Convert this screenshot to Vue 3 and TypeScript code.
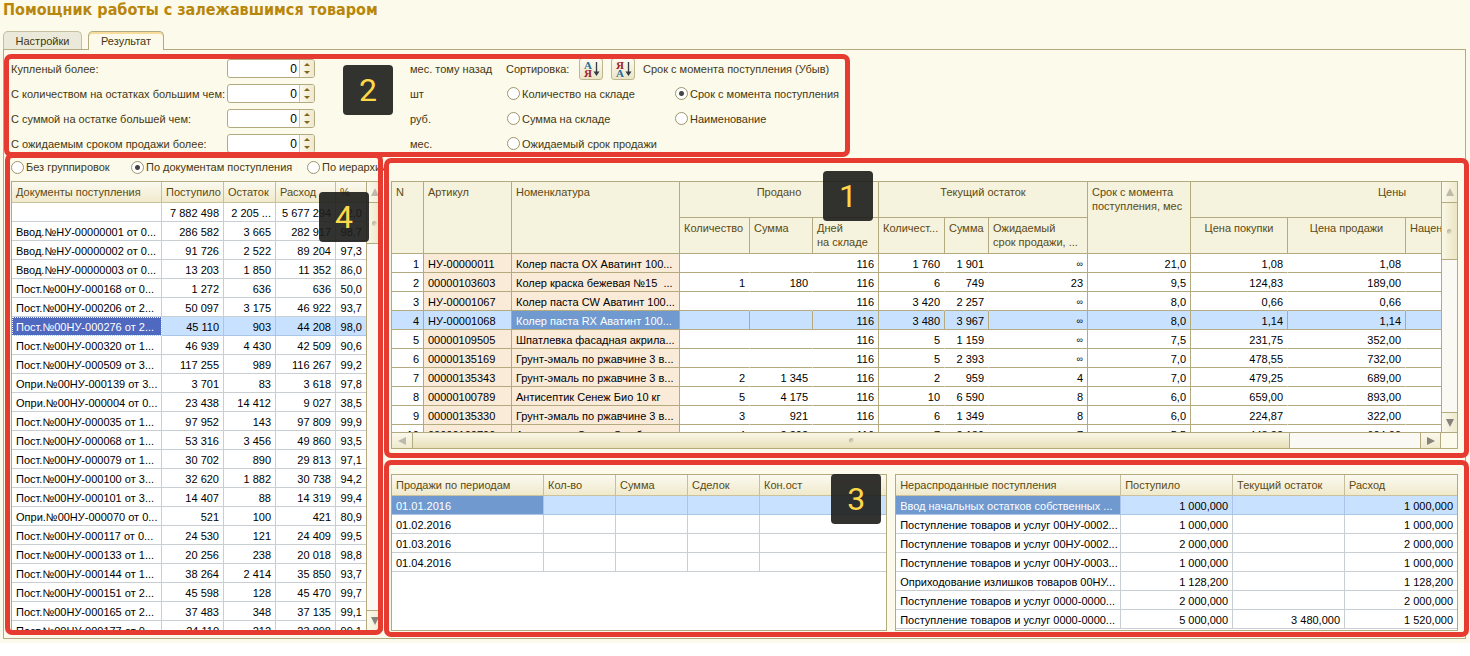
<script setup lang="ts">
import { ref } from 'vue'

interface Filter {
  id: string
  label: string
  unit: string
  value: string
}

const filters = ref<Filter[]>([
  { id: 'bought', label: 'Купленый более:', unit: 'мес. тому назад', value: '0' },
  { id: 'qty', label: 'С количеством на остатках большим чем:', unit: 'шт', value: '0' },
  { id: 'sum', label: 'С суммой на остатке большей чем:', unit: 'руб.', value: '0' },
  { id: 'term', label: 'С ожидаемым сроком продажи более:', unit: 'мес.', value: '0' },
])

const sortOptions = [
  ['Количество на складе', 'Срок с момента поступления'],
  ['Сумма на складе', 'Наименование'],
  ['Ожидаемый срок продажи'],
]
const sortBy = ref('Срок с момента поступления')

const groupings = ['Без группировок', 'По документам поступления', 'По иерархии']
const grouping = ref('По документам поступления')

const receipts: string[][] = [
  ['', '7 882 498', '2 205 ...', '5 677 294', '72,0'],
  ['Ввод.№НУ-00000001 от 0...', '286 582', '3 665', '282 917', '98,7'],
  ['Ввод.№НУ-00000002 от 0...', '91 726', '2 522', '89 204', '97,3'],
  ['Ввод.№НУ-00000003 от 0...', '13 203', '1 850', '11 352', '86,0'],
  ['Пост.№00НУ-000168 от 0...', '1 272', '636', '636', '50,0'],
  ['Пост.№00НУ-000206 от 2...', '50 097', '3 175', '46 922', '93,7'],
  ['Пост.№00НУ-000276 от 2...', '45 110', '903', '44 208', '98,0'],
  ['Пост.№00НУ-000320 от 1...', '46 939', '4 430', '42 509', '90,6'],
  ['Пост.№00НУ-000509 от 3...', '117 255', '989', '116 267', '99,2'],
  ['Опри.№00НУ-000139 от 3...', '3 701', '83', '3 618', '97,8'],
  ['Опри.№00НУ-000004 от 0...', '23 438', '14 412', '9 027', '38,5'],
  ['Пост.№00НУ-000035 от 1...', '97 952', '143', '97 809', '99,9'],
  ['Пост.№00НУ-000068 от 1...', '53 316', '3 456', '49 860', '93,5'],
  ['Пост.№00НУ-000079 от 1...', '30 702', '890', '29 813', '97,1'],
  ['Пост.№00НУ-000100 от 3...', '32 620', '1 882', '30 738', '94,2'],
  ['Пост.№00НУ-000101 от 3...', '14 407', '88', '14 319', '99,4'],
  ['Опри.№00НУ-000070 от 0...', '521', '100', '421', '80,9'],
  ['Пост.№00НУ-000117 от 0...', '24 530', '121', '24 409', '99,5'],
  ['Пост.№00НУ-000133 от 1...', '20 256', '238', '20 018', '98,8'],
  ['Пост.№00НУ-000144 от 1...', '38 264', '2 414', '35 850', '93,7'],
  ['Пост.№00НУ-000151 от 2...', '45 598', '128', '45 470', '99,7'],
  ['Пост.№00НУ-000165 от 2...', '37 483', '348', '37 135', '99,1'],
  ['Пост.№00НУ-000177 от 0...', '24 110', '212', '23 898', '99,1'],
]

const goods: string[][] = [
  ['1', 'НУ-00000011', 'Колер паста OX Аватинт 100...', '', '', '116', '1 760', '1 901', '∞', '21,0', '1,08', '1,08', ''],
  ['2', '00000103603', 'Колер краска бежевая №15  ...', '1', '180', '116', '6', '749', '23', '9,5', '124,83', '189,00', ''],
  ['3', 'НУ-00001067', 'Колер паста CW Аватинт 100...', '', '', '116', '3 420', '2 257', '∞', '8,0', '0,66', '0,66', ''],
  ['4', 'НУ-00001068', 'Колер паста RX Аватинт 100...', '', '', '116', '3 480', '3 967', '∞', '8,0', '1,14', '1,14', ''],
  ['5', '00000109505', 'Шпатлевка фасадная акрила...', '', '', '116', '5', '1 159', '∞', '7,5', '231,75', '352,00', ''],
  ['6', '00000135169', 'Грунт-эмаль по ржавчине 3 в...', '', '', '116', '5', '2 393', '∞', '7,0', '478,55', '732,00', ''],
  ['7', '00000135343', 'Грунт-эмаль по ржавчине 3 в...', '2', '1 345', '116', '2', '959', '4', '7,0', '479,25', '689,00', ''],
  ['8', '00000100789', 'Антисептик Сенеж Био 10 кг', '5', '4 175', '116', '10', '6 590', '8', '6,0', '659,00', '893,00', ''],
  ['9', '00000135330', 'Грунт-эмаль по ржавчине 3 в...', '3', '921', '116', '6', '1 349', '8', '6,0', '224,87', '322,00', ''],
  ['10', '00000100790', 'Антисептик Сенеж Эко б...', '4', '2 292', '116', '7', '3 139', '7', '5,5', '448,33', '604,00', ''],
]

const periods = ['01.01.2016', '01.02.2016', '01.03.2016', '01.04.2016']

const unsold: string[][] = [
  ['Ввод начальных остатков собственных ...', '1 000,000', '', '1 000,000'],
  ['Поступление товаров и услуг 00НУ-0002...', '1 000,000', '', '1 000,000'],
  ['Поступление товаров и услуг 00НУ-0002...', '2 000,000', '', '2 000,000'],
  ['Поступление товаров и услуг 00НУ-0003...', '1 000,000', '', '1 000,000'],
  ['Оприходование излишков товаров 00НУ...', '1 128,200', '', '1 128,200'],
  ['Поступление товаров и услуг 0000-0000...', '2 000,000', '', '2 000,000'],
  ['Поступление товаров и услуг 0000-0000...', '5 000,000', '3 480,000', '1 520,000'],
]

function step(f: Filter, d: number) {
  f.value = String(Math.max(0, (Number(f.value) || 0) + d))
}
</script>

<template>
  <main class="page">
    <h1>Помощник работы с залежавшимся товаром</h1>

    <nav class="tabs">
      <button type="button" class="tab">Настройки</button>
      <button type="button" class="tab active">Результат</button>
    </nav>

    <div class="panel">
      <section class="filters">
        <template v-for="(f, i) in filters" :key="f.id">
          <label :for="f.id">{{ f.label }}</label>
          <div class="field">
            <input :id="f.id" v-model="f.value" type="text" />
            <span class="spin">
              <button type="button" aria-label="Больше" @click="step(f, 1)">
                <svg width="6" height="3" viewBox="0 0 6 3"><path d="M0 3L3 0L6 3Z" fill="#85651a" /></svg>
              </button>
              <button type="button" aria-label="Меньше" @click="step(f, -1)">
                <svg width="6" height="3" viewBox="0 0 6 3"><path d="M0 0L3 3L6 0Z" fill="#85651a" /></svg>
              </button>
            </span>
          </div>
          <span>{{ f.unit }}</span>
          <div v-if="i === 0" class="sorting">
            <span class="sort-label">Сортировка:</span>
            <button type="button" class="sort" aria-label="По возрастанию">
              <svg width="22" height="20" viewBox="0 0 22 20">
                <text x="4" y="10" class="blue">А</text>
                <text x="4" y="18" class="red">Я</text>
                <path d="M16.500 3V14" stroke="#333d46" stroke-width="1.300" />
                <path d="M13.500 12.500H19.500L16.500 17Z" fill="#333d46" />
              </svg>
            </button>
            <button type="button" class="sort" aria-label="По убыванию">
              <svg width="22" height="20" viewBox="0 0 22 20">
                <text x="4" y="10" class="red">Я</text>
                <text x="4" y="18" class="blue">А</text>
                <path d="M16.500 3V14" stroke="#333d46" stroke-width="1.300" />
                <path d="M13.500 12.500H19.500L16.500 17Z" fill="#333d46" />
              </svg>
            </button>
            <span>Срок с момента поступления (Убыв)</span>
          </div>
          <div v-else class="options">
            <label v-for="o in sortOptions[i - 1]" :key="o" class="radio">
              <input v-model="sortBy" type="radio" name="sort" :value="o" />{{ o }}
            </label>
          </div>
        </template>
        <div class="frame frame-filters"></div>
        <div class="badge badge-2">2</div>
      </section>

      <div class="columns">
        <section class="left">
          <div class="groupings">
            <label v-for="g in groupings" :key="g" class="radio">
              <input v-model="grouping" type="radio" name="grouping" :value="g" />{{ g }}
            </label>
          </div>
          <div class="box receipts">
            <div class="view">
              <table class="plain">
                <colgroup><col class="w150" /><col class="w62" /><col class="w52" /><col class="w60" /><col class="w31" /></colgroup>
                <thead>
                  <tr><th>Документы поступления</th><th>Поступило</th><th>Остаток</th><th>Расход</th><th>%</th></tr>
                </thead>
                <tbody>
                  <tr v-for="(r, i) in receipts" :key="i" :class="{ selected: i === 6 }">
                    <td v-for="(c, j) in r" :key="j" :class="{ num: j > 0, focus: i === 6 && j === 0 }">{{ c }}</td>
                  </tr>
                </tbody>
              </table>
            </div>
            <div class="vbar">
              <button type="button" class="cap" aria-label="Вверх"><svg width="8" height="8" viewBox="0 0 8 8"><path d="M0 8L4 0L8 8Z" fill="#bdbaa9" /></svg></button>
              <div class="thumb thumb-short"><i></i></div>
              <div class="track"></div>
              <button type="button" class="cap bottom" aria-label="Вниз"><svg width="8" height="8" viewBox="0 0 8 8"><path d="M0 0L4 8L8 0Z" fill="#85837c" /></svg></button>
            </div>
          </div>
          <div class="frame frame-left"></div>
          <div class="badge badge-4">4</div>
        </section>

        <div class="right">
          <section class="main">
            <div class="box goods">
              <div class="view">
                <table class="grid">
                  <colgroup>
                    <col class="w32" /><col class="w88" /><col class="w168" /><col class="w70" /><col class="w63" /><col class="w66" /><col class="w66" /><col class="w44" /><col class="w99" /><col class="w103" /><col class="w97" /><col class="w118" /><col class="w188" />
                  </colgroup>
                  <thead>
                    <tr>
                      <th rowspan="2">N</th>
                      <th rowspan="2">Артикул</th>
                      <th rowspan="2">Номенклатура</th>
                      <th colspan="3" class="mid">Продано</th>
                      <th colspan="3" class="mid">Текущий остаток</th>
                      <th rowspan="2">Срок с момента<br />поступления, мес</th>
                      <th colspan="3" class="mid">Цены</th>
                    </tr>
                    <tr>
                      <th>Количество</th>
                      <th>Сумма</th>
                      <th>Дней<br />на складе</th>
                      <th>Количест...</th>
                      <th>Сумма</th>
                      <th>Ожидаемый<br />срок продажи, ...</th>
                      <th class="mid">Цена покупки</th>
                      <th class="mid">Цена продажи</th>
                      <th>Наценка</th>
                    </tr>
                  </thead>
                  <tbody>
                    <tr v-for="(r, i) in goods" :key="i" :class="{ selected: i === 3 }">
                      <td
                        v-for="(c, j) in r"
                        :key="j"
                        :class="{
                          num: j !== 1 && j !== 2,
                          tint: j === 1 || j === 2,
                          open: [3, 4, 6, 7, 10, 11].includes(j),
                          endless: c === '∞',
                          current: i === 3 && j === 2,
                        }"
                      >{{ c }}</td>
                    </tr>
                  </tbody>
                </table>
              </div>
              <div class="vbar">
                <button type="button" class="cap" aria-label="Вверх"><svg width="8" height="8" viewBox="0 0 8 8"><path d="M0 8L4 0L8 8Z" fill="#bdbaa9" /></svg></button>
                <div class="thumb thumb-long"><i></i></div>
                <div class="track"></div>
                <button type="button" class="cap bottom" aria-label="Вниз"><svg width="8" height="8" viewBox="0 0 8 8"><path d="M0 0L4 8L8 0Z" fill="#85837c" /></svg></button>
              </div>
              <div class="hbar">
                <button type="button" class="cap" aria-label="Влево"><svg width="8" height="8" viewBox="0 0 8 8"><path d="M8 0L0 4L8 8Z" fill="#bdbaa9" /></svg></button>
                <div class="thumb"><i></i></div>
                <div class="track"></div>
                <button type="button" class="cap end" aria-label="Вправо"><svg width="8" height="8" viewBox="0 0 8 8"><path d="M0 0L8 4L0 8Z" fill="#85837c" /></svg></button>
              </div>
            </div>
            <div class="frame frame-main"></div>
            <div class="badge badge-1">1</div>
          </section>

          <section class="details">
            <div class="box sales">
              <table class="plain">
                <colgroup><col class="w152" /><col class="w72" /><col class="w72" /><col class="w72" /><col /></colgroup>
                <thead>
                  <tr><th>Продажи по периодам</th><th>Кол-во</th><th>Сумма</th><th>Сделок</th><th>Кон.ост</th></tr>
                </thead>
                <tbody>
                  <tr v-for="(p, i) in periods" :key="p" :class="{ selected: i === 0 }">
                    <td :class="{ current: i === 0 }">{{ p }}</td><td></td><td></td><td></td><td></td>
                  </tr>
                </tbody>
              </table>
              <div class="badge badge-3">3</div>
            </div>
            <div class="box unsold">
              <table class="plain">
                <colgroup><col class="w225" /><col /><col /><col /></colgroup>
                <thead>
                  <tr><th>Нераспроданные поступления</th><th>Поступило</th><th>Текущий остаток</th><th>Расход</th></tr>
                </thead>
                <tbody>
                  <tr v-for="(r, i) in unsold" :key="i" :class="{ selected: i === 0 }">
                    <td v-for="(c, j) in r" :key="j" :class="{ num: j > 0, current: i === 0 && j === 0 }">{{ c }}</td>
                  </tr>
                </tbody>
              </table>
            </div>
            <div class="frame frame-details"></div>
          </section>
        </div>
      </div>
    </div>
  </main>
</template>

<style>
body {
  background: #fff;
}
</style>

<style scoped>
* {
  box-sizing: border-box;
}
.page {
  padding: 0 3px 4px;
  overflow: hidden;
  background: #fcfaeb;
  color: #453811;
  font: 11px/14px "Liberation Sans", Arial, sans-serif;
}
button,
input {
  margin: 0;
  padding: 0;
  border: 0;
  background: none;
  color: inherit;
  font: inherit;
}
h1 {
  margin: 0;
  height: 31px;
  color: #b8860b;
  font: bold 16px/20px "DejaVu Sans Condensed", "DejaVu Sans", sans-serif;
  white-space: nowrap;
}
.tabs {
  display: flex;
  gap: 6px;
  height: 18px;
}
.tab {
  height: 18px;
  width: 79px;
  border: 1px solid #c5bf9f;
  border-bottom: 0;
  border-radius: 5px 5px 0 0;
  background: #ebe9d9;
}
.tab.active {
  position: relative;
  height: 19px;
  width: 76px;
  border-color: #b3aa80;
  background: #fcfaeb;
  box-shadow: inset 0 2px 0 #f8dc9c;
}
.panel {
  margin-right: 1px;
  border: 1px solid #b3aa80;
  padding: 6px 7px 7px;
}
.filters {
  position: relative;
  display: grid;
  width: max-content;
  grid-template-columns: 216px 183px 96px 336px;
  grid-auto-rows: 25px;
  align-items: center;
  white-space: nowrap;
}
.field {
  display: flex;
  width: 88px;
  height: 19px;
  border: 1px solid #b3aa80;
  border-radius: 3px;
  background: #fff;
  overflow: hidden;
}
.field input {
  flex: 1;
  min-width: 0;
  padding-right: 2px;
  color: #000;
  font-size: 12px;
  text-align: right;
}
.spin {
  display: flex;
  flex-direction: column;
  width: 15px;
  border-left: 1px solid #cdc7a6;
  background: linear-gradient(90deg, #fbf9ec, #efe9cd);
}
.spin button,
.cap {
  display: flex;
  align-items: center;
  justify-content: center;
}
.spin button {
  flex: 1;
}
.sorting {
  display: flex;
  align-items: center;
  gap: 8px;
}
.sort-label {
  width: 65px;
}
.sort {
  width: 24px;
  height: 22px;
  border: 1px solid #bdb68f;
  border-radius: 3px;
  background: linear-gradient(#fdfbf0, #ebe5c8);
}
.sort svg {
  display: block;
}
.sort text {
  font: bold 11px "Liberation Serif", serif;
}
.blue {
  fill: #2b6a94;
}
.red {
  fill: #9c1c24;
}
.options {
  display: grid;
  grid-template-columns: 168px 168px;
  padding-left: 1px;
}
.radio {
  display: flex;
  align-items: center;
  gap: 2px;
  white-space: nowrap;
}
.radio input {
  flex: none;
  width: 13px;
  height: 13px;
  appearance: none;
  border: 1px solid #9e956f;
  border-radius: 50%;
  background: #fff;
}
.radio input:checked {
  background: radial-gradient(circle, #444 2px, #fff 3px);
}
.columns {
  display: flex;
  gap: 8px;
}
.left {
  position: relative;
  flex: none;
  width: 372px;
}
.groupings {
  display: grid;
  grid-template-columns: 120px 176px auto;
  align-items: center;
  height: 25px;
  padding-bottom: 3px;
}
.box {
  border: 1px solid #b3aa80;
  background: #fff;
}
.view {
  overflow: hidden;
}
.receipts {
  display: grid;
  grid-template-columns: 1fr 16px;
  height: 450px;
}
.right {
  flex: 1;
  min-width: 0;
  padding-top: 25px;
}
.main {
  position: relative;
}
.goods {
  display: grid;
  grid-template-columns: 1fr 16px;
  grid-template-rows: 250px 16px;
}
.details {
  position: relative;
  display: flex;
  gap: 8px;
  margin-top: 25px;
}
.sales {
  position: relative;
  flex: 496 1 0;
  height: 157px;
}
.unsold {
  flex: 563 1 0;
  height: 157px;
}
table {
  width: 100%;
  table-layout: fixed;
  border-collapse: separate;
  border-spacing: 0;
}
th,
td {
  padding: 0 4px;
  overflow: hidden;
  white-space: pre;
  text-align: left;
}
th {
  color: #5c4a12;
  font-weight: normal;
}
td {
  height: 19px;
  padding-top: 2px;
  color: #000;
  line-height: 16px;
}
.num {
  text-align: right;
}
.endless {
  font-size: 9px;
}
.plain th {
  height: 21px;
  border-right: 1px solid #c5bf9f;
  border-bottom: 1px solid #c9c29c;
  background: linear-gradient(#fbfaf1, #f0e9cb);
}
.plain td {
  border-right: 1px solid #c9ced2;
  border-bottom: 1px solid #c9ced2;
}
.sales th:last-child,
.sales td:last-child,
.unsold th:last-child,
.unsold td:last-child {
  border-right: 0;
}
.grid {
  width: 1202px;
}
.grid th {
  height: 36px;
  padding-top: 3px;
  border-right: 1px solid #b3aa80;
  border-bottom: 1px solid #b3aa80;
  background: #f5f2de;
  line-height: 14px;
  vertical-align: top;
}
.grid .mid {
  text-align: center;
}
.grid td {
  border-right: 1px solid #b3aa80;
  border-bottom: 1px solid #b3aa80;
}
.grid td.open {
  border-right-color: transparent;
}
.grid td.tint {
  background: #faead8;
}
.grid .selected td.open {
  border-right-color: #b3aa80;
}
.grid .selected td,
.plain .selected td {
  background: #c8e1ff;
}
.plain .selected td {
  border-color: #a9c5e8;
}
.grid .selected td.current,
.plain .selected td.current {
  background: #6f99cf;
  color: #fff;
}
.plain .selected td.focus {
  background: #4f68c0;
  color: #fff;
  outline: 1px dotted #fff;
  outline-offset: -1px;
}
.w31 { width: 31px; }
.w32 { width: 32px; }
.w44 { width: 44px; }
.w52 { width: 52px; }
.w60 { width: 60px; }
.w62 { width: 62px; }
.w63 { width: 63px; }
.w66 { width: 66px; }
.w70 { width: 70px; }
.w72 { width: 72px; }
.w88 { width: 88px; }
.w97 { width: 97px; }
.w99 { width: 99px; }
.w103 { width: 103px; }
.w118 { width: 118px; }
.w150 { width: 150px; }
.w152 { width: 152px; }
.w168 { width: 168px; }
.w188 { width: 188px; }
.w225 { width: 225px; }
.vbar {
  display: flex;
  flex-direction: column;
  border-left: 1px solid #b3aa80;
}
.vbar .cap {
  height: 20px;
  background: linear-gradient(90deg, #fbf9ec, #efe9cd);
}
.vbar .bottom {
  border-top: 1px solid #b3aa80;
}
.thumb {
  display: flex;
  align-items: center;
  justify-content: center;
  background: linear-gradient(90deg, #f9f7e6, #ece5c3);
}
.thumb i {
  width: 5px;
  height: 5px;
  border-radius: 50%;
  background: linear-gradient(135deg, #aaa68d, #f3efd8);
}
.vbar .thumb {
  border-top: 1px solid #b3aa80;
  border-bottom: 1px solid #b3aa80;
}
.thumb-short {
  height: 42px;
}
.thumb-long {
  height: 58px;
}
.track {
  flex: 1;
  background: #faf9f4;
}
.hbar {
  grid-column: 1 / 3;
  display: flex;
  padding-right: 16px;
  border-top: 1px solid #b3aa80;
  background: #fcfaeb;
}
.hbar .cap {
  width: 20px;
  background: linear-gradient(#fbf9ec, #efe9cd);
}
.hbar .end {
  width: 21px;
  border-left: 1px solid #b3aa80;
  border-right: 1px solid #b3aa80;
}
.hbar .thumb {
  flex: 878 1 0;
  border-left: 1px solid #b3aa80;
  border-right: 1px solid #b3aa80;
  background: linear-gradient(#f9f7e6, #e8e0ba);
}
.hbar .track {
  flex: 130 1 0;
}
.frame {
  position: absolute;
  border: 5px solid #e63b31;
  border-radius: 7px;
  pointer-events: none;
}
.frame-filters {
  inset: -2px -8px -1px -7px;
}
.frame-left {
  inset: -3px 0 -4px -6px;
}
.frame-main {
  inset: -23px -11px -9px -7px;
}
.frame-details {
  inset: -14px -11px -6px -7px;
}
.badge {
  position: absolute;
  width: 50px;
  height: 50px;
  border-radius: 4px;
  background: rgba(30, 30, 28, 0.91);
  color: #ffd84a;
  font: 32px/50px Roboto, "Liberation Sans", sans-serif;
  text-align: center;
}
.badge-1 {
  left: 432px;
  top: -10px;
}
.badge-2 {
  left: 332px;
  top: 9px;
}
.badge-3 {
  right: 5px;
  top: -1px;
}
.badge-4 {
  right: 14px;
  top: 36px;
}
</style>
